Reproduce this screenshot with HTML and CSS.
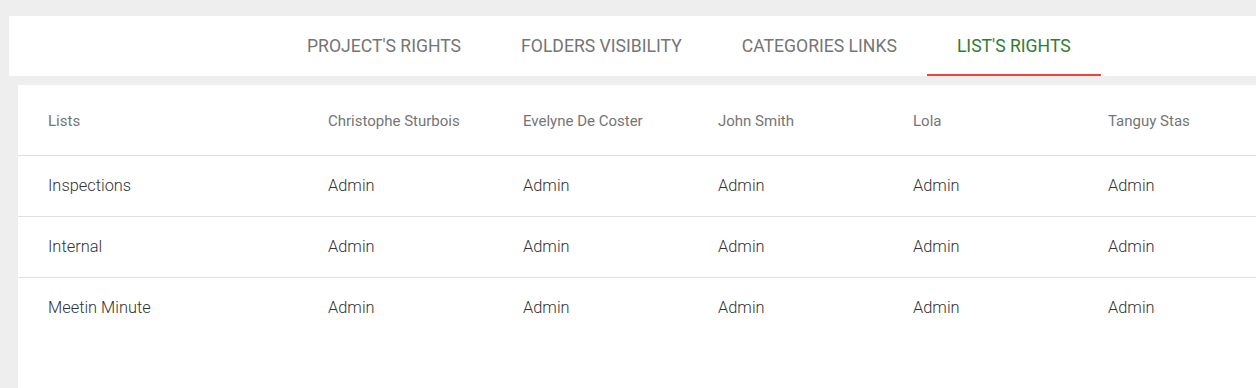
FILE: index.html
```html
<!DOCTYPE html>
<html lang="en">
<head>
  <meta charset="UTF-8" />
  <title>List's rights</title>
  <link rel="stylesheet" href="styles.css">
</head>
<body>

  <!-- TABS -->
  <nav class="tabs">
    <a href="#" class="tab">Project's rights</a>
    <a href="#" class="tab">Folders visibility</a>
    <a href="#" class="tab">Categories links</a>
    <a href="#" class="tab active">List's rights</a>
  </nav>

  <!-- RIGHTS TABLE -->
  <div class="card">
    <table class="rights">
      <thead>
        <tr>
          <th>Lists</th>
          <th>Christophe Sturbois</th>
          <th>Evelyne De Coster</th>
          <th>John Smith</th>
          <th>Lola</th>
          <th>Tanguy Stas</th>
        </tr>
      </thead>
      <tbody>
        <tr>
          <td>Inspections</td>
          <td>Admin</td><td>Admin</td><td>Admin</td><td>Admin</td><td>Admin</td>
        </tr>
        <tr>
          <td>Internal</td>
          <td>Admin</td><td>Admin</td><td>Admin</td><td>Admin</td><td>Admin</td>
        </tr>
        <tr class="last">
          <td>Meetin Minute</td>
          <td>Admin</td><td>Admin</td><td>Admin</td><td>Admin</td><td>Admin</td>
        </tr>
      </tbody>
    </table>
  </div>

</body>
</html>
```

FILE: styles.css
```css
* {
  box-sizing: border-box;
  font-family: Roboto, 'Noto Sans', sans-serif;
}

body {
  margin: 0;
  background: #eeeeee;
  padding: 16px 0 0 9px;
  min-height: 100vh;
  overflow: hidden;
}

.tabs {
  display: flex;
  background: #fff;
  height: 60px;
  padding-left: 268px;
}

.tab {
  display: flex;
  align-items: center;
  padding: 2px 30px 0;
  font-size: 17.6px;
  color: #757575;
  text-transform: uppercase;
  text-decoration: none;
  border-bottom: 2px solid transparent;
}

.tab.active {
  color: #2e7d32;
  border-bottom-color: #f44336;
}

.card {
  background: #fff;
  margin: 9px 0 0 9px;
  min-height: 320px;
}

.rights {
  border-collapse: collapse;
  table-layout: fixed;
  width: 1280px;
}

.rights th,
.rights td {
  text-align: left;
  padding: 0 0 0 30px;
  white-space: nowrap;
}

.rights th:nth-child(n+2),
.rights td:nth-child(n+2) {
  padding-left: 0;
}

.rights th:first-child { width: 310px; }
.rights th { width: 195px; }

.rights th {
  height: 70px;
  padding-top: 2px;
  font-size: 15px;
  font-weight: 400;
  color: #757575;
  border-bottom: 1px solid #e0e0e0;
}

.rights td {
  height: 61px;
  font-size: 16.4px;
  font-weight: 300;
  color: #333;
  border-bottom: 1px solid #e0e0e0;
}

.rights tr.last td {
  border-bottom: none;
}
```
